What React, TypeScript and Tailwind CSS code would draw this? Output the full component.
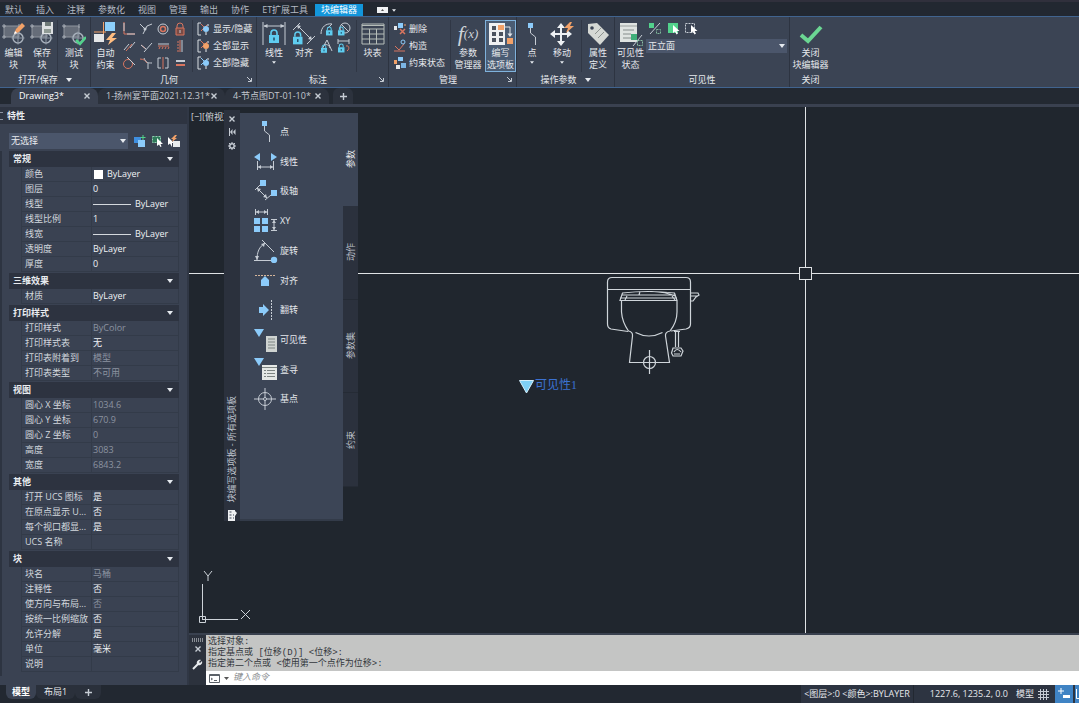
import type { ReactNode } from 'react';

const INK = '#c6ccd4';
const BLUE = '#8ccbfa';
const ORANGE = '#f2a168';
const GREEN = '#52d28c';
const RED = '#d9755f';

type SvgProps = { w: number; h: number; children: ReactNode; className?: string };

function Svg({ w, h, children, className = '' }: SvgProps) {
  return (
    <svg width={w} height={h} viewBox={`0 0 ${w} ${h}`} fill="none" stroke={INK} strokeWidth={1} className={`shrink-0 ${className}`} aria-hidden="true">
      {children}
    </svg>
  );
}

function Caret({ className = '' }: { className?: string }) {
  return (
    <Svg w={6} h={4} className={className}>
      <path d="M0 0h6L3 4z" fill="#e6eaef" stroke="none" />
    </Svg>
  );
}

function Lock({ x, y, s = 1 }: { x: number; y: number; s?: number }) {
  return (
    <g transform={`translate(${x} ${y}) scale(${s})`}>
      <path d="M2 5V3a3 3 0 0 1 6 0v2" stroke="#5fcdf0" strokeWidth={1.6} />
      <path d="M0 5h10v8H0z" fill="#5fcdf0" stroke="none" />
      <path d="M5 7.500v3" stroke="#24506b" strokeWidth={1.6} />
    </g>
  );
}

/* ---------- large ribbon icons ---------- */

function BlockShape() {
  return (
    <>
      <path d="M2 4h15v11H2z" fill="#666d79" stroke="#8f959e" />
      <path d="M0 4h4M2 2v4M0 15h4M2 13v4M17 2v4" stroke="#a5abb4" />
      <circle cx="16" cy="16" r="5" stroke="#a9b2bd" strokeWidth={1.500} />
      <path d="M16 9.500v13M9.500 16h13" stroke="#8f98a5" />
    </>
  );
}

function EditBlockIcon() {
  return (
    <Svg w={24} h={24}>
      <BlockShape />
      <path d="M12 12l2-5 6-6 3 3-6 6z" fill={ORANGE} stroke="none" />
      <path d="M12 12l1-3 2 2z" fill="#fff" stroke="none" />
    </Svg>
  );
}

function SaveBlockIcon() {
  return (
    <Svg w={24} h={24}>
      <BlockShape />
      <path d="M12 0h11v12H12z" fill="#dde0e2" stroke="none" />
      <path d="M15 0h6v4h-6z" fill="#6f7a78" stroke="none" />
      <path d="M14 7h7v4h-7z" fill="#8f9a94" stroke="none" />
    </Svg>
  );
}

function TestBlockIcon() {
  return (
    <Svg w={24} h={24}>
      <BlockShape />
      <path d="M14 18l4 4 6-7" stroke={GREEN} strokeWidth={2.500} />
    </Svg>
  );
}

function AutoConstrainIcon() {
  return (
    <Svg w={24} h={24}>
      <path d="M9.500 0v12M0 10h12" stroke={ORANGE} />
      <path d="M11 0h10v9H11z" fill="#8dd0fb" stroke="none" />
      <path d="M0 12h10v8H0z" fill="#e4e6e8" stroke="none" />
      <path d="M18 11l-6 7h4l-2 5 9-7h-5l4-5z" fill="#ffbd80" stroke="none" />
    </Svg>
  );
}

function LinearIcon() {
  return (
    <Svg w={24} h={24}>
      <path d="M1 0v23M23 0v23M2 4h20" />
      <path d="M1.500 4l4-2v4zM22.500 4l-4-2v4z" fill={INK} stroke="none" />
      <Lock x={7} y={8} />
    </Svg>
  );
}

function AlignedIcon() {
  return (
    <Svg w={24} h={24}>
      <path d="M1 8L8 1M15 22l8-8M6 4l13 13" />
      <path d="M5 3l4 1-3 3zM20 18l-1-4-3 3z" fill={INK} stroke="none" />
      <Lock x={1} y={10} s={0.95} />
    </Svg>
  );
}

function TableIcon() {
  return (
    <Svg w={24} h={22}>
      <path d="M1 1h22v20H1zM1 6h22M1 11h22M1 16h22M8.500 6v15M15.500 6v15" stroke="#b6bdb9" />
      <path d="M1 2.500h22" stroke="#b6bdb9" />
    </Svg>
  );
}

function FxIcon() {
  return (
    <span className="flex h-6 items-center font-['Liberation_Serif',serif] text-[22px] leading-6 text-[#cdd2d8] italic">
      f<span className="text-[13px]">(x)</span>
    </span>
  );
}

function AuthoringIcon() {
  return (
    <Svg w={26} h={24}>
      <path d="M1 1h16v22H1z" fill="#eef0f1" stroke="none" />
      <path d="M4 4h4v4H4zM4 10h4v4H4zM4 16h4v4H4zM11 10h4v4h-4zM11 16h4v4h-4z" fill="#4a525e" stroke="none" />
      <path d="M10 3h6v5h-6zM19 16h6v6h-6z" fill={ORANGE} stroke="none" />
      <path d="M16 5h6v8" stroke="#dfe3e7" />
      <path d="M19.500 11.500h5L22 15z" fill="#dfe3e7" stroke="none" />
    </Svg>
  );
}

function PointIcon() {
  return (
    <Svg w={12} h={24}>
      <path d="M2 1h5v5H2z" fill={BLUE} stroke="none" />
      <path d="M4.500 6v5l5 4v8" />
    </Svg>
  );
}

function MoveIcon() {
  return (
    <Svg w={24} h={24}>
      <path d="M11 5v15M3 12h16" stroke="#eef1f4" strokeWidth={2} />
      <path d="M11 1l4 5H7zM11 24l4-5H7zM0 12l5-4v8zM22 12l-5-4v8z" fill="#eef1f4" stroke="none" />
      <path d="M20 0l-6 6h4l-2 5 8-7h-4l2-4z" fill={ORANGE} stroke="none" />
    </Svg>
  );
}

function TagIcon() {
  return (
    <Svg w={24} h={24}>
      <path d="M2 2l9-1 12 12-9 10L2 11z" fill="#d5d8d4" stroke="none" />
      <circle cx="6" cy="6" r="1.800" fill="#3b4454" stroke="none" />
      <path d="M9 12l6-6M12 16l6-6" stroke="#8d938f" />
    </Svg>
  );
}

function VisibilityStateIcon() {
  return (
    <Svg w={24} h={24}>
      <path d="M1 1h17v19H1z" fill="#dfe3e1" stroke="none" />
      <path d="M1 4h17" stroke="#9aa09e" />
      <path d="M4 8h11M4 12h8M4 16h8" stroke="#858c8b" />
      <path d="M12 12h6v6h-6z" fill="#3fae79" stroke="none" />
      <path d="M14 24l9-11" />
      <path d="M18.500 18.500h5v5h-5z" strokeDasharray="2 1" stroke="#8bbfa4" />
    </Svg>
  );
}

function CheckIcon() {
  return (
    <Svg w={24} h={24}>
      <path d="M2 13l7 6L22 5" stroke="#6bd693" strokeWidth={4} />
    </Svg>
  );
}

/* ---------- small ribbon icons, 14px ---------- */

const geometricIcons: { name: string; art: ReactNode }[] = [
  { name: '重合', art: <><path d="M2 0v12h11" stroke={RED} /><path d="M2 1v8M5 12h8" /></> },
  { name: '共线', art: <><path d="M1 2l5 5M4 12l4-8 5-2" /><circle cx="6" cy="7" r="1.500" fill={INK} stroke="none" /></> },
  { name: '同心', art: <><circle cx="7" cy="7" r="5" /><circle cx="7" cy="7" r="2.500" stroke={RED} strokeWidth={1.500} /></> },
  { name: '固定', art: <><path d="M4 6V4a3 3 0 0 1 6 0v2" stroke={RED} /><path d="M3 6h8v7H3z" stroke={RED} fill="#7a4b45" /><path d="M7 8v3" /></> },
  { name: '平行', art: <><path d="M2 11l5-6M8 9l5-6" /><path d="M4 12l6-7" stroke={RED} /></> },
  { name: '垂直', art: <><path d="M2 6l5 4" stroke={RED} /><path d="M5 13l8-9M2 6l5 4" /></> },
  { name: '水平', art: <><path d="M2 5h11" /><path d="M2 7h11M3 10l1-2M6 10l1-2M9 10l1-2M12 10l1-2" stroke={RED} /></> },
  { name: '竖直', art: <><path d="M9 1v12" /><path d="M7 1v12M4 3h2M4 6h2M4 9h2M4 12h2" stroke={RED} /></> },
  { name: '相切', art: <><circle cx="6" cy="8" r="4.500" stroke={RED} /><path d="M5 1l8 8" /></> },
  { name: '平滑', art: <><path d="M1 3c4 0 6 2 7 4" stroke={RED} /><path d="M5 2c2 5 4 5 8 5M9 7v6" /></> },
  { name: '对称', art: <><path d="M5 2H2v10h3M9 2h3v10H9" /><path d="M7 1v12" stroke={RED} /></> },
  { name: '相等', art: <><path d="M3 5h9" strokeWidth={2} /><path d="M3 9h9" stroke={RED} strokeWidth={2} /></> },
];

function ShowHideIcon({ dot, blue }: { dot: string; blue?: boolean }) {
  return (
    <Svg w={14} h={14}>
      <path d="M4 1H1v12h3" stroke="#d9dde2" />
      <path d="M4 2l4 4M4 9l6-6" stroke={blue ? BLUE : RED} />
      <circle cx="9" cy="7" r="3" fill={dot} stroke="none" />
      <path d="M9 10v3M11 2v2" stroke="#e8ebee" />
    </Svg>
  );
}

const dimensionIcons: { name: string; art: ReactNode }[] = [
  { name: '半径', art: <><path d="M1 12C1 5 6 1 12 2M8 6l4-4" /><Lock x={6} y={5} s={0.65} /></> },
  { name: '直径', art: <><circle cx="8" cy="6" r="5" /><path d="M4 2l8 8" /><Lock x={1} y={5} s={0.65} /></> },
  { name: '角度', art: <><path d="M1 12L7 1l5 11M4 6c3-1 5 0 6 3" /><Lock x={1} y={6} s={0.6} /></> },
  { name: '转换', art: <><path d="M1 2h11M1 0v5M12 0v5" /><path d="M9 7c3-1 4 3 1 5" stroke={RED} /><Lock x={1} y={5} s={0.65} /></> },
];

function DeleteIcon() {
  return (
    <Svg w={14} h={14}>
      <path d="M5 1h5v5H5z" fill={BLUE} stroke="none" />
      <path d="M1 4h3v4H1z" fill="#e6e8ea" stroke="none" />
      <path d="M7 7l5 5M12 7l-5 5" stroke={RED} strokeWidth={1.500} />
      <path d="M11 3h2" stroke={ORANGE} />
    </Svg>
  );
}

function ConstructIcon() {
  return (
    <Svg w={14} h={14}>
      <path d="M2 7l4 4 5-6M1 12h11" stroke={RED} />
      <circle cx="10" cy="3" r="2" stroke={BLUE} />
    </Svg>
  );
}

function StatusIcon() {
  return (
    <Svg w={14} h={14}>
      <path d="M5 1h5v4H5z" fill={BLUE} stroke="none" />
      <path d="M1 4h3v4H1z" fill={ORANGE} stroke="none" />
      <path d="M3 9h4v4H3z" fill="#e6e8ea" stroke="none" />
      <path d="M8 7h5v5H8z" fill="#7bb5e4" stroke="none" />
    </Svg>
  );
}

/* ---------- ribbon ---------- */

type BigButtonProps = { icon: ReactNode; lines: string[]; caret?: boolean; width: string; active?: boolean };

function BigButton({ icon, lines, caret, width, active }: BigButtonProps) {
  return (
    <button
      className={`flex h-[52px] shrink-0 flex-col items-center whitespace-nowrap border ${width} ${
        active ? 'border-[#7fb2dc] bg-[#4a5c73]' : 'border-transparent'
      }`}
    >
      <span className="flex h-[26px] items-center">{icon}</span>
      {lines.map((line) => (
        <span key={line} className="leading-3">{line}</span>
      ))}
      {caret && <Caret className="mt-0.5 h-[3px] w-1" />}
    </button>
  );
}

function RowButton({ icon, label }: { icon: ReactNode; label: string }) {
  return (
    <button className="flex h-[17px] items-center gap-0.5 whitespace-nowrap leading-3">
      {icon}
      {label}
    </button>
  );
}

type PanelProps = { title: string; width: string; caret?: boolean; launcher?: boolean; children: ReactNode };

function Panel({ title, width, caret, launcher, children }: PanelProps) {
  return (
    <section className={`flex shrink-0 flex-col border-r border-[#2d3441] ${width}`}>
      <div className="flex h-[55px] items-start pt-[3px]">{children}</div>
      <div className="flex h-[15px] items-center">
        <h2 className="flex flex-1 items-center justify-center gap-2 leading-3">
          {title}
          {caret && <Caret />}
        </h2>
        {launcher && (
          <button aria-label={`${title}设置`} className="mr-1">
            <Svg w={5} h={5}>
              <path d="M0 0l4 4M4.500 1v3.500H1" />
            </Svg>
          </button>
        )}
      </div>
    </section>
  );
}

function Divider() {
  return <div className="h-[52px] w-px shrink-0 bg-[#303745]" />;
}

function Ribbon() {
  return (
    <div className="flex h-[72px] shrink-0 overflow-hidden border-y border-[#41648f] bg-[#3b4454] text-[9px] text-[#e6e9ed]">
      <Panel title="打开/保存" width="w-[91px]" caret>
        <BigButton icon={<EditBlockIcon />} lines={['编辑', '块']} width="w-[27px]" />
        <BigButton icon={<SaveBlockIcon />} lines={['保存', '块']} width="w-[30px]" />
        <Divider />
        <BigButton icon={<TestBlockIcon />} lines={['测试', '块']} width="w-8" />
      </Panel>

      <Panel title="几何" width="w-[166px]" launcher>
        <BigButton icon={<AutoConstrainIcon />} lines={['自动', '约束']} width="w-[29px]" />
        <div className="mt-0.5 grid w-[68px] grid-cols-4 gap-y-[3px]">
          {geometricIcons.map((icon) => (
            <button key={icon.name} aria-label={icon.name} className="flex justify-center">
              <Svg w={14} h={14}>{icon.art}</Svg>
            </button>
          ))}
        </div>
        <div className="ml-1"><Divider /></div>
        <div className="ml-1 flex flex-col">
          <RowButton icon={<ShowHideIcon dot={BLUE} />} label="显示/隐藏" />
          <RowButton icon={<ShowHideIcon dot={ORANGE} />} label="全部显示" />
          <RowButton icon={<ShowHideIcon dot={BLUE} blue />} label="全部隐藏" />
        </div>
      </Panel>

      <Panel title="标注" width="w-[132px]" launcher>
        <BigButton icon={<LinearIcon />} lines={['线性']} width="w-[34px]" caret />
        <BigButton icon={<AlignedIcon />} lines={['对齐']} width="w-[26px]" />
        <div className="mt-0.5 grid w-9 grid-cols-2 gap-y-[3px] pl-0.5">
          {dimensionIcons.map((icon) => (
            <button key={icon.name} aria-label={icon.name} className="flex justify-center">
              <Svg w={14} h={14}>{icon.art}</Svg>
            </button>
          ))}
        </div>
        <div className="ml-1"><Divider /></div>
        <BigButton icon={<TableIcon />} lines={['块表']} width="w-[31px]" />
      </Panel>

      <Panel title="管理" width="w-[128px]" launcher>
        <div className="ml-1 flex w-[57px] flex-col">
          <RowButton icon={<DeleteIcon />} label="删除" />
          <RowButton icon={<ConstructIcon />} label="构造" />
          <RowButton icon={<StatusIcon />} label="约束状态" />
        </div>
        <Divider />
        <BigButton icon={<FxIcon />} lines={['参数', '管理器']} width="w-[34px]" />
        <BigButton icon={<AuthoringIcon />} lines={['编写', '选项板']} width="w-[31px]" active />
      </Panel>

      <Panel title="操作参数" width="w-[98px]" caret>
        <BigButton icon={<PointIcon />} lines={['点']} width="w-[30px]" caret />
        <BigButton icon={<MoveIcon />} lines={['移动']} width="w-[30px]" caret />
        <div className="ml-1"><Divider /></div>
        <BigButton icon={<TagIcon />} lines={['属性', '定义']} width="w-8" />
      </Panel>

      <Panel title="可见性" width="w-[175px]">
        <BigButton icon={<VisibilityStateIcon />} lines={['可见性', '状态']} width="w-[31px]" />
        <div className="flex flex-1 flex-col gap-1 pr-0.5">
          <div className="flex gap-1 pt-0.5 pl-0.5">
            <button aria-label="可见性模式">
              <Svg w={14} h={13}>
                <path d="M1 1h5v5H1z" fill={GREEN} stroke="none" />
                <path d="M2 12L12 1" />
                <path d="M8.500 7.500h4v4h-4z" strokeDasharray="2 1" stroke="#7fb79a" />
              </Svg>
            </button>
            <button aria-label="使可见">
              <Svg w={14} h={13}>
                <path d="M2 1h10v10H2z" fill={GREEN} stroke="none" />
                <path d="M7 3v8l2-1.500 1.500 3 1.500-1-1.500-2.500h3z" fill="#fff" stroke="none" />
              </Svg>
            </button>
            <button aria-label="使不可见">
              <Svg w={14} h={13}>
                <path d="M1.500 1.500h9v9h-9z" strokeDasharray="2 1" />
                <path d="M7 3v8l2-1.500 1.500 3 1.500-1-1.500-2.500h3z" fill="#fff" stroke="none" />
              </Svg>
            </button>
          </div>
          <div className="relative">
            <select aria-label="可见性状态" className="block h-[14px] w-full appearance-none bg-[#4b566b] px-0.5 text-[9px] leading-[14px]">
              <option>正立面</option>
            </select>
            <Caret className="pointer-events-none absolute top-[5px] right-0.5" />
          </div>
        </div>
      </Panel>

      <div className="flex w-[41px] shrink-0 flex-col">
        <div className="flex h-[55px] justify-center pt-[3px]">
          <BigButton icon={<CheckIcon />} lines={['关闭', '块编辑器']} width="w-[41px]" />
        </div>
        <h2 className="text-center leading-[15px]">关闭</h2>
      </div>
    </div>
  );
}

/* ---------- menu and file tabs ---------- */

const menus = ['默认', '插入', '注释', '参数化', '视图', '管理', '输出', '协作', 'ET扩展工具'];

function MenuBar() {
  return (
    <nav className="flex h-4 shrink-0 items-end border-t-2 border-[#30303c] bg-[#222831] text-[9px] leading-3 whitespace-nowrap text-[#b4bac3]">
      <div className="flex gap-[13px] px-[5px]">
        {menus.map((menu) => (
          <button key={menu}>{menu}</button>
        ))}
      </div>
      <button className="ml-0.5 bg-[#1296db] px-1.5 text-white">块编辑器</button>
      <button aria-label="功能区显示" className="mb-[3px] ml-3.5 flex items-center gap-1">
        <Svg w={11} h={6}>
          <path d="M0 0h11v6H0z" fill="#f0f2f4" stroke="none" />
          <path d="M4 4l1.500-2L7 4z" fill="#555" stroke="none" />
        </Svg>
        <Caret className="h-[3px] w-1" />
      </button>
    </nav>
  );
}

function Cross({ className = '' }: { className?: string }) {
  return (
    <Svg w={6} h={6} className={className}>
      <path d="M0.500 0.500l5 5M5.500 0.500l-5 5" strokeWidth={1.400} />
    </Svg>
  );
}

const files = [
  { name: 'Drawing3*', width: 'w-[87px]', active: true },
  { name: '1-扬州宴平面2021.12.31*', width: 'w-[127px]', active: false },
  { name: '4-节点图DT-01-10*', width: 'w-[104px]', active: false },
];

function FileTabs() {
  return (
    <div className="flex h-[19px] shrink-0 items-stretch border-b-[3px] border-[#3a4150] bg-[#232932] pl-[11px] text-[9px] whitespace-nowrap">
      {files.map((file) => (
        <div
          key={file.name}
          className={`flex items-center justify-between rounded-t-lg pr-2 pl-2 ${file.width} ${
            file.active ? 'bg-[#3a4150] text-white' : 'bg-[#2c323d] text-[#c3c8cf]'
          }`}
        >
          <button>{file.name}</button>
          <button aria-label={`关闭 ${file.name}`}><Cross /></button>
        </div>
      ))}
      <button aria-label="新图形" className="ml-1 flex w-5 items-center justify-center rounded-t-md bg-[#2c323d]">
        <Svg w={7} h={7}><path d="M3.500 0v7M0 3.500h7" strokeWidth={1.400} /></Svg>
      </button>
    </div>
  );
}

/* ---------- properties palette ---------- */

type Row = { name: string; value?: string; dim?: boolean; swatch?: boolean; line?: boolean };

const sections: { title: string; rows: Row[] }[] = [
  {
    title: '常规',
    rows: [
      { name: '颜色', value: 'ByLayer', swatch: true },
      { name: '图层', value: '0' },
      { name: '线型', value: 'ByLayer', line: true },
      { name: '线型比例', value: '1' },
      { name: '线宽', value: 'ByLayer', line: true },
      { name: '透明度', value: 'ByLayer' },
      { name: '厚度', value: '0' },
    ],
  },
  { title: '三维效果', rows: [{ name: '材质', value: 'ByLayer' }] },
  {
    title: '打印样式',
    rows: [
      { name: '打印样式', value: 'ByColor', dim: true },
      { name: '打印样式表', value: '无' },
      { name: '打印表附着到', value: '模型', dim: true },
      { name: '打印表类型', value: '不可用', dim: true },
    ],
  },
  {
    title: '视图',
    rows: [
      { name: '圆心 X 坐标', value: '1034.6', dim: true },
      { name: '圆心 Y 坐标', value: '670.9', dim: true },
      { name: '圆心 Z 坐标', value: '0', dim: true },
      { name: '高度', value: '3083', dim: true },
      { name: '宽度', value: '6843.2', dim: true },
    ],
  },
  {
    title: '其他',
    rows: [
      { name: '打开 UCS 图标', value: '是' },
      { name: '在原点显示 U...', value: '否' },
      { name: '每个视口都显...', value: '是' },
      { name: 'UCS 名称' },
    ],
  },
  {
    title: '块',
    rows: [
      { name: '块名', value: '马桶', dim: true },
      { name: '注释性', value: '否' },
      { name: '使方向与布局...', value: '否', dim: true },
      { name: '按统一比例缩放', value: '否' },
      { name: '允许分解', value: '是' },
      { name: '单位', value: '毫米' },
      { name: '说明' },
    ],
  },
];

function PropertySection({ title, rows }: { title: string; rows: Row[] }) {
  return (
    <section className="mb-px">
      <button className="flex h-4 w-full items-center justify-between bg-[#2d3340] pr-1.5 pl-1 font-bold">
        {title}
        <Caret />
      </button>
      <table className="w-full table-fixed border-separate border-spacing-0 leading-3">
        <tbody>
          {rows.map((row) => (
            <tr key={row.name} className="h-[15px]">
              <td className="w-3 p-0" />
              <th scope="row" className="w-[71px] border-x border-b border-[#333b49] p-0 pl-[3px] text-left font-normal whitespace-nowrap text-[#d3d8de]">
                <span className="block h-3">{row.name}</span>
              </th>
              <td className={`border-r border-b border-[#333b49] p-0 pl-px ${row.dim ? 'text-[#8c93a0]' : 'text-[#f0f2f5]'}`}>
                <span className="flex h-3 items-center">
                  {row.swatch && <span className="mr-1 ml-px size-[9px] bg-white" />}
                  {row.line && <span className="mr-1 h-px w-[38px] bg-[#d5d9de]" />}
                  {row.value}
                </span>
              </td>
            </tr>
          ))}
        </tbody>
      </table>
    </section>
  );
}

function Properties() {
  return (
    <aside className="flex w-[189px] shrink-0 flex-col border-r-2 border-[#303745] bg-[#3a4252] text-[9px] leading-[14px] text-[#e8ebef]">
      <h2 className="flex h-[17px] shrink-0 items-center gap-1 bg-[#2e3441] font-bold">
        <span className="h-2 w-[3px] border-y border-[#8b92a0]" />
        特性
      </h2>
      <div className="mt-[9px] flex h-4 shrink-0 items-center gap-[5px] pr-[7px] pl-[9px]">
        <div className="relative mr-px flex-1">
          <select aria-label="选择对象" className="block h-4 w-full appearance-none bg-[#4b566b] px-0.5 text-[9px] leading-4">
            <option>无选择</option>
          </select>
          <Caret className="pointer-events-none absolute top-1.5 right-0.5" />
        </div>
        <button aria-label="切换 PICKADD">
          <Svg w={12} h={12}>
            <path d="M0 2h7v6H0z" fill="#3f8fe0" stroke="none" />
            <path d="M4 5h7v7H4z" fill={BLUE} stroke="none" />
            <path d="M9 0v5M6.500 2.500h5" stroke={GREEN} />
          </Svg>
        </button>
        <button aria-label="选择对象">
          <Svg w={12} h={12}>
            <path d="M1.500 1.500h8v6h-8z" fill="#2f7a5a" strokeDasharray="2 1" stroke="#8fd0b0" />
            <path d="M6 3v8l2-1.500 1.500 2.500 1-0.500L9.500 9H12z" fill="#fff" stroke="none" />
          </Svg>
        </button>
        <button aria-label="快速选择">
          <Svg w={12} h={12}>
            <path d="M0 2v8l2-1.500L4 12V8h2z" fill="#fff" stroke="none" />
            <path d="M7 0L3 4h2L4 7l5-4H7l2-3z" fill={ORANGE} stroke="none" />
            <path d="M5 6h7v6H5z" fill="#e9ecee" stroke="none" />
          </Svg>
        </button>
      </div>
      <div className="mt-0.5 mr-2 mb-[9px] min-h-0 flex-1 overflow-hidden border-l-2 border-[#2d3441] pl-[7px]">
        {sections.map((section) => (
          <PropertySection key={section.title} title={section.title} rows={section.rows} />
        ))}
      </div>
    </aside>
  );
}

/* ---------- block authoring palette ---------- */

const parameters: { name: string; art: ReactNode }[] = [
  { name: '点', art: <><path d="M8 1h5v5H8z" fill={BLUE} stroke="none" /><path d="M10.500 6v5l5 4v7" /></> },
  { name: '线性', art: <><path d="M0 7l6-4v8zM23 7l-6-4v8z" fill={BLUE} stroke="none" /><path d="M3.500 11v9M19.500 11v9M4 17h15" /><path d="M4 17l3-2v4zM19 17l-3-2v4z" fill={INK} stroke="none" /></> },
  { name: '极轴', art: <><path d="M6 1h6v6H6zM17 11h6v6h-6z" fill={BLUE} stroke="none" /><path d="M1 11l5-5M11 21l6-5M3 9l10 10" /><path d="M3 9l4 1-3 3zM13 19l-1-4-3 3z" fill={INK} stroke="none" /></> },
  { name: 'XY', art: <><path d="M0 9h6v6H0zM8 9h6v6H8zM0 17h6v6H0zM8 17h6v6H8z" fill={BLUE} stroke="none" /><path d="M1.500 0v6M13.500 0v6M2 3h11M17 10.500h6M17 21.500h6M20 11v10" /><path d="M2 3l3-2v4zM13 3l-3-2v4zM20 11l-2 3h4zM20 21l-2-3h4z" fill={INK} stroke="none" /></> },
  { name: '旋转', art: <><path d="M0 21.500h20M8 1l12 12M3 21C3 13 5 8 11 4" /><path d="M3 21l-2-4h4zM11 4L7 5l3 3z" fill={INK} stroke="none" /><circle cx="20" cy="21" r="3.200" fill={BLUE} stroke="none" /></> },
  { name: '对齐', art: <><path d="M1 7.500h20" strokeDasharray="2 1" stroke="#d5b59a" /><path d="M11 8l4 4v6H7v-6z" fill={BLUE} stroke="none" /></> },
  { name: '翻转', art: <><path d="M5 9h4V6l6 6-6 6v-3H5z" fill={BLUE} stroke="none" /><path d="M17.500 2v20" strokeDasharray="2 1" /></> },
  { name: '可见性', art: <><path d="M0 1h10L5 9z" fill={BLUE} stroke="none" /><path d="M12 8h11v16H12z" fill="#cfd3d1" stroke="none" /><path d="M14 11h7M14 14h7M14 17h7M14 20h7" stroke="#7d8482" /></> },
  { name: '查寻', art: <><path d="M0 1h10L5 9z" fill={BLUE} stroke="none" /><path d="M8 8h15v15H8z" fill="#e5e8e6" stroke="none" /><path d="M8 10.500h15M10 13.500h2M13 13.500h8M10 16.500h2M13 16.500h8M10 19.500h2M13 19.500h8" stroke="#7d8482" /></> },
  { name: '基点', art: <><circle cx="11" cy="12" r="6.500" /><path d="M11 1v22M0 12h22" /><circle cx="11" cy="12" r="1.500" fill="#3c4556" /></> },
];

const paletteTabs = ['参数', '动作', '参数集', '约束'];

function AuthoringPalette() {
  return (
    <div className="absolute top-[3px] left-[35px] flex items-start text-[9px] text-[#e4e7eb]">
      <div className="flex h-[411px] w-4 flex-col items-center bg-[#2b313d] pt-1.5">
        <button aria-label="关闭选项板"><Cross /></button>
        <button aria-label="自动隐藏" className="mt-1.5">
          <Svg w={8} h={8}>
            <path d="M1.500 0v8" />
            <path d="M4.500 1v6L2 4zM7.500 1v6L5 4z" fill={INK} stroke="none" />
          </Svg>
        </button>
        <button aria-label="特性" className="mt-1.5">
          <Svg w={8} h={8}>
            <circle cx="4" cy="4" r="2.200" strokeWidth={1.500} />
            <path d="M4 0v1.500M4 6.500V8M0 4h1.500M6.500 4H8M1 1l1 1M6 6l1 1M7 1L6 2M1 7l1-1" />
          </Svg>
        </button>
        <h2 className="mt-auto rotate-180 whitespace-nowrap text-[#b9bfc8] [text-orientation:sideways] [writing-mode:vertical-rl]">
          块编写选项板 - 所有选项板
        </h2>
        <Svg w={10} h={12} className="mt-1.5">
          <path d="M1 1h7v11H1z" fill="#eef0f2" stroke="none" />
          <path d="M2.500 3h2M2.500 6h2M2.500 9h2M6 6h1M6 9h1" stroke="#3a4252" />
          <path d="M7 1l3 3-2 3" fill="#eef0f2" stroke="none" />
        </Svg>
      </div>
      <div className="mt-[3px] h-[408px] w-[103px] border-b-2 border-[#333b49] bg-[#3c4556] pt-1 pl-3.5">
        <ul className="grid h-[297px] grid-rows-10">
          {parameters.map((parameter) => (
            <li key={parameter.name} className="flex min-h-0 items-center">
              <button className="flex items-center gap-0.5">
                <Svg w={24} h={24}>{parameter.art}</Svg>
                {parameter.name}
              </button>
            </li>
          ))}
        </ul>
      </div>
      <div className="mt-[3px] flex h-[374px] w-[15px] flex-col">
        {paletteTabs.map((tab, i) => (
          <button
            key={tab}
            className={`flex flex-1 items-center justify-center ${i === 0 ? 'bg-[#3c4556]' : 'border-b border-[#252b35] bg-[#2b313d] text-[#b9bfc8]'}`}
          >
            <span className="rotate-180 [text-orientation:sideways] [writing-mode:vertical-rl]">{tab}</span>
          </button>
        ))}
      </div>
    </div>
  );
}

/* ---------- drawing area ---------- */

function Toilet() {
  return (
    <svg width={96} height={100} viewBox="0 0 96 100" fill="none" stroke="#cfd5da" strokeWidth={1.200} className="absolute top-[169px] left-[416px]" aria-hidden="true">
      {/* tank */}
      <path d="M23 55.500L6 53Q2.500 52 2.500 48V6Q2.500 1.500 7 1.500H81Q85.500 1.500 85.500 6V48Q85.500 52 81 53L66 55M2.500 13.500H85.500" />
      {/* seat and lid */}
      <path d="M15 24.500H72L69.500 17Q43 14 17.500 17ZM17 19H70M15 22H72M35 15.500L34 19M45 15.500Q62 16 70 20M22 20L20 24M67 20L70 24" />
      {/* bowl and foot */}
      <path d="M16.500 25V36C17 44 20 50 23.500 55Q28 56 27.500 60L24.500 86.500H64.500L60.500 60Q60 56 65 55C69 50 72 44 72 36V25" />
      <path d="M30.500 56.500Q44 63.500 57.500 56.500" />
      {/* base point */}
      <circle cx="44.500" cy="86.500" r="6" />
      <path d="M44.500 74v24" />
      {/* handle and valve */}
      <path d="M86 17H93L94 19L91 21L88 25H86M86 20H92" />
      <path d="M70.500 55V71M73.500 55V71M69 55.500H75M68 72H76L78 75L76 80H68L66.500 77ZM69 76Q72 71 76 76M69 78H75" />
    </svg>
  );
}

function Canvas() {
  return (
    <div className="relative min-h-0 flex-1 overflow-hidden bg-[#20262e]">
      <span className="absolute top-1 left-0.5 text-[9px] leading-3 whitespace-nowrap text-[#d4d8dd]">[−][俯视]</span>
      <div className="absolute top-[166px] h-px w-full bg-[#dfe2e5]" />
      <div className="absolute left-[616px] h-full w-px bg-[#dfe2e5]" />
      <div className="absolute top-[160px] left-[610px] size-[13px] border border-[#dfe2e5] bg-[#20262e]" />
      <Toilet />
      <div className="absolute top-[269px] left-[330px] flex items-center gap-px font-['Liberation_Serif','Noto_Sans_CJK_SC',serif] text-xs leading-4 text-[#3c72d2]">
        <Svg w={15} h={14} className="mt-1">
          <path d="M0.500 0.500h14L7.500 13z" fill="#7fd0f5" stroke="#d6effb" />
        </Svg>
        可见性1
      </div>
      <svg width={60} height={58} viewBox="0 0 60 58" fill="none" stroke="#cdd3d9" className="absolute bottom-[7px] left-2" aria-hidden="true">
        <path d="M5.500 16V51M5 51.500H41" />
        <path d="M2.500 48.500h6v6h-6z" />
        <path d="M7 3l4 5 4-5M11 8v5M44 42l9 9M53 42l-9 9" />
      </svg>
      <AuthoringPalette />
    </div>
  );
}

function CommandLine() {
  return (
    <div className="flex h-[52px] shrink-0 border-t-2 border-[#39414f] bg-[#2c323d] font-['Liberation_Mono','Noto_Sans_CJK_SC',monospace] text-[9px]">
      <div className="flex w-[17px] flex-col items-center gap-1 pt-[3px]">
        <Svg w={12} h={4}>
          <path d="M0 1h12M0 3h12" stroke="#e8ebee" strokeDasharray="1 1" />
        </Svg>
        <button aria-label="关闭命令行"><Cross /></button>
        <button aria-label="自定义" className="mt-[3px]">
          <Svg w={11} h={11}>
            <path d="M1 10l5-5" stroke="#e8ebee" strokeWidth={2} />
            <path d="M5 5C4 2 7 0 9 1L7 3l1 1 2-2c1 3-2 5-4 4z" fill="#e8ebee" stroke="none" />
          </Svg>
        </button>
      </div>
      <div className="flex flex-1 flex-col">
        <div className="flex-1 bg-[#c4c5c4] pt-0.5 pl-0.5 leading-[11px] text-[#33373c]">
          <p>选择对象:</p>
          <p>指定基点或 [位移(D)] &lt;位移&gt;:</p>
          <p>指定第二个点或 &lt;使用第一个点作为位移&gt;:</p>
        </div>
        <div className="flex h-[14px] items-center gap-1 bg-white pl-[3px]">
          <Svg w={11} h={9}>
            <path d="M0.500 0.500h10v8h-10zM0 1.500h11M2 4l1.500 1L2 6M5 6.500h3" stroke="#5b6168" />
          </Svg>
          <Svg w={5} h={3}>
            <path d="M0 0h5L2.500 3z" fill="#555" stroke="none" />
          </Svg>
          <input aria-label="命令" placeholder="键入命令" className="h-[14px] flex-1 italic outline-none placeholder:text-[#8a8d90]" />
        </div>
      </div>
    </div>
  );
}

function StatusBar() {
  return (
    <footer className="flex h-[18px] shrink-0 items-stretch justify-between bg-[#222831] text-[9px] leading-[14px] whitespace-nowrap text-[#e6e8ec]">
      <div className="flex pb-1 pl-1.5">
        <button className="rounded-b-md bg-[#3a4252] px-1.5 font-bold text-white">模型</button>
        <button className="rounded-b-md bg-[#2a303b] px-2">布局1</button>
        <button aria-label="新布局" className="flex w-[26px] items-center justify-center rounded-b-md bg-[#2a303b]">
          <Svg w={7} h={7}><path d="M3.500 0v7M0 3.500h7" strokeWidth={1.400} /></Svg>
        </button>
      </div>
      <div className="flex items-center overflow-hidden bg-[#2d3441]">
        <span className="px-[3px]">&lt;图层&gt;:0 &lt;颜色&gt;:BYLAYER</span>
        <span className="h-full w-px bg-[#222831]" />
        <span className="ml-4">1227.6, 1235.2, 0.0</span>
        <button className="ml-2">模型</button>
        <button aria-label="栅格" className="ml-1">
          <Svg w={11} h={11}><path d="M2.500 0v11M5.500 0v11M8.500 0v11M0 2.500h11M0 5.500h11M0 8.500h11" /></Svg>
        </button>
        <button aria-label="捕捉模式" className="ml-1.5 flex h-full w-[18px] items-center justify-center bg-[#3f83c4]">
          <Svg w={12} h={12}>
            <path d="M3 0v6M0 3h6" stroke="#fff" />
            <path d="M5 7h7v3H5z" fill="#fff" stroke="none" />
          </Svg>
        </button>
        <button aria-label="正交模式" className="ml-0.5 flex h-full w-1 items-center overflow-hidden bg-[#3f83c4]">
          <Svg w={4} h={10}><path d="M1.500 0v9.500H4" stroke="#fff" /></Svg>
        </button>
      </div>
    </footer>
  );
}

export default function App() {
  return (
    <div className="flex h-screen flex-col overflow-hidden bg-[#222831] font-['Open_Sans','Noto_Sans_CJK_SC',sans-serif]">
      <MenuBar />
      <Ribbon />
      <FileTabs />
      <main className="flex min-h-0 flex-1">
        <Properties />
        <div className="flex min-w-0 flex-1 flex-col">
          <Canvas />
          <CommandLine />
        </div>
      </main>
      <StatusBar />
    </div>
  );
}
